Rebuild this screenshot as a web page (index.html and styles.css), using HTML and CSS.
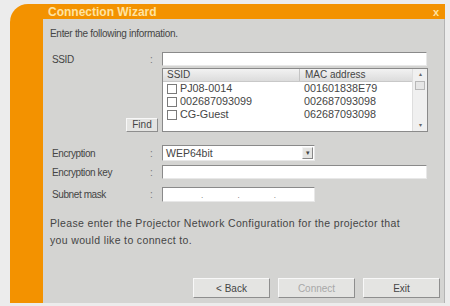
FILE: index.html
```html
<!DOCTYPE html>
<html lang="en">
<head>
  <meta charset="UTF-8" />
  <meta name="viewport" content="width=device-width, initial-scale=1.0" />
  <title>Connection Wizard</title>
  <link rel="stylesheet" href="styles.css">
</head>
<body>
  <div class="window">
    <div class="titlebar">
      <span class="title">Connection Wizard</span>
      <span class="close">x</span>
    </div>

    <div class="panel">
      <p class="intro">Enter the following information.</p>

      <div class="row row-ssid">
        <span class="label">SSID</span><span class="colon">:</span>
        <div class="field wide"></div>
      </div>

      <div class="row row-list">
        <div class="find-cell"><button class="btn find">Find</button></div>
        <div class="list">
          <div class="list-main">
            <div class="list-head">
              <span class="col-ssid">SSID</span>
              <span class="col-mac">MAC address</span>
            </div>
            <div class="list-row"><span class="col-ssid"><i class="check"></i>PJ08-0014</span><span class="col-mac">001601838E79</span></div>
            <div class="list-row"><span class="col-ssid"><i class="check"></i>002687093099</span><span class="col-mac">002687093098</span></div>
            <div class="list-row"><span class="col-ssid"><i class="check"></i>CG-Guest</span><span class="col-mac">062687093098</span></div>
          </div>
          <div class="scrollbar">
            <span class="arrow">&#9652;</span>
            <span class="thumb"></span>
            <span class="spacer"></span>
            <span class="arrow">&#9662;</span>
          </div>
        </div>
      </div>

      <div class="row row-enc">
        <span class="label">Encryption</span><span class="colon">:</span>
        <div class="field select">
          <span class="select-value">WEP64bit</span>
          <span class="select-btn">&#9662;</span>
        </div>
      </div>

      <div class="row row-key">
        <span class="label">Encryption key</span><span class="colon">:</span>
        <div class="field wide"></div>
      </div>

      <div class="row row-mask">
        <span class="label">Subnet mask</span><span class="colon">:</span>
        <div class="field ip">
          <span></span><b>.</b><span></span><b>.</b><span></span><b>.</b><span></span>
        </div>
      </div>

      <p class="note">Please enter the Projector Network Configuration for the projector that<br>you would like to connect to.</p>

      <div class="actions">
        <button class="btn">&lt; Back</button>
        <button class="btn disabled">Connect</button>
        <button class="btn">Exit</button>
      </div>
    </div>
  </div>
</body>
</html>
```

FILE: styles.css
```css
:root {
  --orange: #f39200;
  --panel: #d4d4d2;
  --text: #454545;
}

body {
  margin: 0;
  background: #ececec;
  font-family: 'Liberation Sans', Arial, sans-serif;
  font-size: 10px;
  color: var(--text);
}

.window {
  margin: 4px 5px 0 10px;
  height: 299px;
  background: var(--orange);
  border-top-left-radius: 18px;
  display: flex;
  flex-direction: column;
}

.titlebar {
  height: 15px;
  display: flex;
  align-items: center;
  justify-content: space-between;
  padding: 0 6px 0 38px;
  color: #ffe3a0;
  font-weight: bold;
  font-size: 12px;
}

.close {
  font-size: 11px;
}

.panel {
  flex: 1;
  margin-left: 33px;
  background: var(--panel);
  border-right: 1px solid #b4b4b4;
  display: flex;
  flex-direction: column;
  padding: 0 4px 5px 0;
}

.intro,
.note {
  margin: 0;
  padding-left: 7px;
}

.intro {
  margin-top: 9px;
  line-height: 12px;
  letter-spacing: -0.3px;
}

.row {
  display: flex;
  align-items: center;
  padding-left: 9px;
}

.label {
  width: 98px;
  letter-spacing: -0.4px;
}

.colon {
  width: 12px;
  color: #777;
}

.field {
  box-sizing: border-box;
  background: #fff;
  border: 1px solid #8a8a8a;
  border-right-color: #e8e8e8;
  border-bottom-color: #e8e8e8;
  height: 14px;
}

.wide {
  width: 265px;
}

.row-ssid { margin-top: 12px; }
.row-list { margin-top: 2px; align-items: flex-end; }
.row-enc  { margin-top: 13px; }
.row-key  { margin-top: 4px; }
.row-mask { margin-top: 8px; }

.find-cell {
  width: 110px;
  display: flex;
  justify-content: flex-end;
  padding-right: 4px;
  box-sizing: border-box;
}

.btn {
  font: inherit;
  color: var(--text);
  background: #e4e4e2;
  border: 1px solid;
  border-color: #f8f8f8 #8e8e8e #8e8e8e #f8f8f8;
  padding: 0;
  height: 20px;
}

.btn.find {
  width: 32px;
  height: 14px;
  line-height: 12px;
}

.btn.disabled {
  color: #a8a8a8;
}

.list {
  width: 266px;
  height: 64px;
  box-sizing: border-box;
  background: #fff;
  border: 1px solid #8a8a8a;
  display: flex;
  font-size: 10.8px;
}

.list-main {
  flex: 1;
}

.list-head {
  display: flex;
  height: 12px;
  line-height: 12px;
  font-size: 10px;
  background: linear-gradient(#f2f2f2, #dcdcdc);
  border-bottom: 1px solid #c8c8c8;
}

.list-head .col-ssid {
  border-right: 1px solid #c4c4c4;
}

.list-row {
  display: flex;
  height: 13px;
  line-height: 13px;
}

.col-ssid {
  width: 132px;
  padding-left: 4px;
  display: flex;
  align-items: center;
}

.col-mac {
  padding-left: 5px;
}

.check {
  width: 8px;
  height: 8px;
  border: 1px solid #7a7a7a;
  background: #fff;
  margin-right: 3px;
}

.scrollbar {
  width: 14px;
  background: #f0f0f0;
  border-left: 1px solid #dedede;
  display: flex;
  flex-direction: column;
  align-items: center;
}

.scrollbar .arrow {
  height: 11px;
  line-height: 11px;
  font-size: 6px;
  color: #666;
}

.scrollbar .thumb {
  width: 10px;
  height: 9px;
  margin-top: 1px;
  box-sizing: border-box;
  border: 1px solid #b8b8b8;
  background: #e6e6e6;
}

.scrollbar .spacer {
  flex: 1;
}

.select {
  width: 153px;
  height: 16px;
  display: flex;
  align-items: center;
  padding-left: 3px;
  font-size: 10.5px;
}

.select-value {
  flex: 1;
}

.select-btn {
  width: 11px;
  height: 12px;
  margin-right: 1px;
  box-sizing: border-box;
  border: 1px solid;
  border-color: #f4f4f4 #888 #888 #f4f4f4;
  background: #e4e4e2;
  font-size: 7px;
  line-height: 10px;
  text-align: center;
}

.ip {
  width: 153px;
  height: 15px;
  display: flex;
  align-items: flex-end;
  padding: 0 4px;
}

.ip span {
  flex: 1;
}

.ip b {
  font-weight: normal;
  font-size: 8px;
  line-height: 10px;
  color: #666;
}

.note {
  margin-top: 13px;
  line-height: 17px;
  font-size: 10.5px;
  letter-spacing: 0.35px;
}

.actions {
  margin-top: auto;
  display: flex;
  justify-content: flex-end;
  gap: 8px;
}

.actions .btn {
  width: 77px;
}
```
